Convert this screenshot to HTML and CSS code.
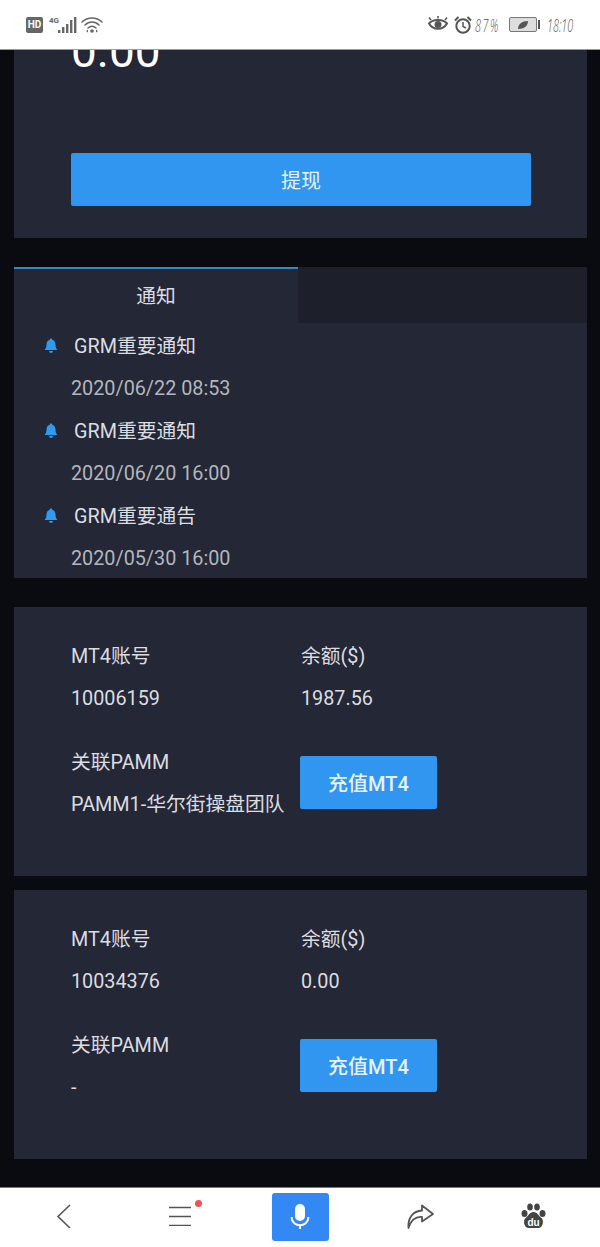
FILE: index.html
```html
<!DOCTYPE html>
<html lang="en">
<head>
    <meta charset="UTF-8">
    <meta name="viewport" content="width=device-width, initial-scale=1.0">
    <title>GRM</title>
    <link rel="stylesheet" href="styles.css">
</head>
<body>
    <div class="status-bar">
        <div class="status-left">
            <span class="hd">HD</span>
            <span class="net">4G</span>
            <svg class="signal" width="19" height="18" viewBox="0 0 19 18"><g fill="#666"><rect x="0" y="14" width="2.4" height="3"/><rect x="4" y="11" width="2.4" height="6"/><rect x="8" y="8" width="2.4" height="9"/><rect x="12" y="4" width="2.4" height="13"/><rect x="16" y="1" width="2.4" height="16"/></g></svg>
            <svg class="wifi" width="22" height="18" viewBox="0 0 22 18"><g fill="none" stroke="#666" stroke-width="1.5" stroke-linecap="round"><path d="M1 6C6.5 0.5 15.500 0.500 21 6"/><path d="M4 9C8 5 14 5 18 9"/><path d="M7 12C9.500 9.800 12.500 9.800 15 12"/></g><circle cx="11" cy="15" r="1.800" fill="#666"/><path d="M5 15l2-1.500v3zM17 15l-2-1.500v3z" fill="#666"/></svg>
        </div>
        <div class="status-right">
            <svg class="eye" width="20" height="17" viewBox="0 0 20 17"><path d="M1 7.500C5 2.800 15 2.800 19 7.500C15 14.500 5 14.500 1 7.500Z" fill="none" stroke="#555" stroke-width="2"/><circle cx="10" cy="8.500" r="3.500" fill="#555"/><path d="M3 4L1 1.500M10 2.500V0M17 4l2-2.500" stroke="#555" stroke-width="1.500"/></svg>
            <svg class="alarm" width="18" height="18" viewBox="0 0 18 18"><circle cx="9" cy="10" r="6.700" fill="none" stroke="#555" stroke-width="2"/><path d="M9 6v4.500l3 1.500" fill="none" stroke="#555" stroke-width="1.500"/><path d="M1 4.500L4.500 1M17 4.500L13.500 1" stroke="#555" stroke-width="2"/></svg>
            <span class="hand pct">87%</span>
            <span class="battery"><svg width="12" height="10" viewBox="0 0 12 10"><path d="M1 9C1 4 5 1 11 1C11 6 7 9 1 9Z" fill="#555"/></svg></span>
            <span class="battery-tip"></span>
            <span class="hand clock">18:10</span>
        </div>
    </div>

    <div class="content">
        <section class="card balance-card">
            <div class="balance">0.00</div>
            <button class="btn btn-wide">提现</button>
        </section>

        <section class="card notice-card">
            <div class="tabs">
                <div class="tab active">通知</div>
                <div class="tab"></div>
            </div>
            <ul class="notice-list">
                <li>
                    <div class="notice-title"><svg class="bell" width="14" height="16" viewBox="0 0 14 16"><path d="M7 0.500C7.800 0.500 8.200 1 8.300 1.700C10.500 2.300 11.500 4.200 11.500 6.500C11.500 9.500 12.300 10.800 13.500 12H0.500C1.700 10.800 2.500 9.500 2.500 6.500C2.500 4.200 3.500 2.300 5.700 1.700C5.800 1 6.200 0.500 7 0.500Z" fill="#2f9bf0"/><path d="M5 13h4c0 2.600-4 2.600-4 0Z" fill="#2f9bf0"/></svg>GRM重要通知</div>
                    <div class="notice-date">2020/06/22 08:53</div>
                </li>
                <li>
                    <div class="notice-title"><svg class="bell" width="14" height="16" viewBox="0 0 14 16"><path d="M7 0.500C7.800 0.500 8.200 1 8.300 1.700C10.500 2.300 11.500 4.200 11.500 6.500C11.500 9.500 12.300 10.800 13.500 12H0.500C1.700 10.800 2.500 9.500 2.500 6.500C2.500 4.200 3.500 2.300 5.700 1.700C5.800 1 6.200 0.500 7 0.500Z" fill="#2f9bf0"/><path d="M5 13h4c0 2.600-4 2.600-4 0Z" fill="#2f9bf0"/></svg>GRM重要通知</div>
                    <div class="notice-date">2020/06/20 16:00</div>
                </li>
                <li>
                    <div class="notice-title"><svg class="bell" width="14" height="16" viewBox="0 0 14 16"><path d="M7 0.500C7.800 0.500 8.200 1 8.300 1.700C10.500 2.300 11.500 4.200 11.500 6.500C11.500 9.500 12.300 10.800 13.500 12H0.500C1.700 10.800 2.500 9.500 2.500 6.500C2.500 4.200 3.500 2.300 5.700 1.700C5.800 1 6.200 0.500 7 0.500Z" fill="#2f9bf0"/><path d="M5 13h4c0 2.600-4 2.600-4 0Z" fill="#2f9bf0"/></svg>GRM重要通告</div>
                    <div class="notice-date">2020/05/30 16:00</div>
                </li>
            </ul>
        </section>

        <section class="card account-card">
            <div class="account-col">
                <div class="row">MT4账号</div>
                <div class="row">10006159</div>
                <div class="row row-gap">关联PAMM</div>
                <div class="row">PAMM1-华尔街操盘团队</div>
            </div>
            <div class="account-col">
                <div class="row">余额($)</div>
                <div class="row">1987.56</div>
                <button class="btn btn-small">充值MT4</button>
            </div>
        </section>

        <section class="card account-card second">
            <div class="account-col">
                <div class="row">MT4账号</div>
                <div class="row">10034376</div>
                <div class="row row-gap">关联PAMM</div>
                <div class="row">-</div>
            </div>
            <div class="account-col">
                <div class="row">余额($)</div>
                <div class="row">0.00</div>
                <button class="btn btn-small">充值MT4</button>
            </div>
        </section>
    </div>

    <nav class="bottom-bar">
        <div class="nav-item back">
            <svg width="16" height="24" viewBox="0 0 16 24"><path d="M14 1L2 12.500L14 24" fill="none" stroke="#555" stroke-width="1.600"/></svg>
        </div>
        <div class="nav-item menu">
            <svg width="22" height="20" viewBox="0 0 22 20"><path d="M0 1.500H22M0 10.500H22M0 19.500H22" stroke="#555" stroke-width="1.600"/></svg>
            <span class="dot"></span>
        </div>
        <div class="nav-item">
            <span class="mic-btn">
                <svg width="20" height="28" viewBox="0 0 20 28"><rect x="5" y="1" width="10" height="17" rx="5" fill="#fff"/><path d="M1.500 14C2 25 18 25 18.500 14" fill="none" stroke="#fff" stroke-width="2"/><path d="M10 22v4" stroke="#fff" stroke-width="2"/></svg>
            </span>
        </div>
        <div class="nav-item">
            <svg width="27" height="25" viewBox="0 0 27 25"><path d="M15 1.500L26 10L15 17.500V13C9 12.500 4 16 1.500 24C0.500 14 6 7 15 6.500Z" fill="none" stroke="#555" stroke-width="1.800" stroke-linejoin="round"/></svg>
        </div>
        <div class="nav-item paw">
            <svg width="25" height="26" viewBox="0 0 25 26"><g fill="#444"><ellipse cx="3.500" cy="10.500" rx="3" ry="3.600"/><ellipse cx="21.500" cy="10.500" rx="3" ry="3.600"/><ellipse cx="9" cy="4" rx="2.800" ry="3.600"/><ellipse cx="16" cy="4" rx="2.800" ry="3.600"/><path d="M12.500 9C8.500 9 7.500 13 4.500 15C2 17 2.500 25 8 25H17C22.500 25 23 17 20.500 15C17.500 13 16.500 9 12.500 9Z"/></g><text class="du" x="12.500" y="22.500" text-anchor="middle">du</text></svg>
        </div>
    </nav>
</body>
</html>
```

FILE: styles.css
```css
* {
    box-sizing: border-box;
}

html, body {
    margin: 0;
    padding: 0;
}

body {
    width: 600px;
    height: 1247px;
    display: flex;
    flex-direction: column;
    overflow: hidden;
    background: #0a0b10;
    font-family: Roboto, "Noto Sans CJK SC", sans-serif;
    font-size: 19.8px;
    color: #dcdde0;
}

.status-bar {
    height: 50px;
    flex: none;
    display: flex;
    justify-content: space-between;
    align-items: center;
    padding: 0 27px 0 26px;
    background: #fff;
    border-bottom: 1px solid #9a9a9c;
}

.status-left, .status-right {
    display: flex;
    align-items: center;
}

.hd {
    width: 17px;
    height: 16px;
    margin-right: 6px;
    background: #666;
    border-radius: 2px;
    color: #fff;
    font-size: 10px;
    font-weight: 700;
    line-height: 16px;
    text-align: center;
}

.net {
    align-self: flex-start;
    font-size: 8px;
    font-weight: 700;
    color: #666;
}

.signal {
    margin: 0 4px 0 -1px;
}

.alarm {
    margin-left: 6px;
}

.hand {
    display: inline-block;
    font-family: "Open Sans", sans-serif;
    font-size: 18px;
    font-weight: 300;
    font-style: italic;
    line-height: 20px;
    color: #555;
    white-space: nowrap;
    transform: scaleX(0.6);
    transform-origin: left center;
}

.pct {
    width: 28px;
    margin-left: 3px;
    letter-spacing: 2.5px;
}

.battery {
    width: 28px;
    height: 15px;
    margin-left: 6px;
    display: flex;
    align-items: center;
    justify-content: center;
    background: #ddd;
    border: 1px solid #777;
    border-radius: 2px;
}

.battery-tip {
    width: 2px;
    height: 9px;
    margin-left: 1px;
    background: #555;
}

.clock {
    width: 26px;
    margin-left: 7px;
}

.content {
    flex: 1;
    overflow: hidden;
    padding: 0 13px 0 14px;
}

.card {
    background: #232736;
}

.balance-card {
    height: 188px;
    padding: 0 57px;
    overflow: hidden;
}

.balance {
    height: 135px;
    margin-top: -32px;
    font-size: 46px;
    line-height: 66px;
    color: #fff;
}

.btn {
    display: block;
    border: none;
    border-radius: 2px;
    background: #3196f0;
    color: #e8f2fc;
    font-family: inherit;
    font-size: 20px;
}

.btn-wide {
    width: 460px;
    height: 53px;
}

.notice-card {
    height: 311px;
    margin-top: 29px;
    overflow: hidden;
}

.tabs {
    display: flex;
    height: 56px;
    background: #1d1f2b;
}

.tab {
    flex: 1;
    line-height: 56px;
    text-align: center;
}

.tab.active {
    flex: none;
    width: 284px;
    background: #232736;
    border-top: 2px solid #3a86c8;
    line-height: 55px;
}

.notice-list {
    margin: 0;
    padding: 0 0 0 57px;
    list-style: none;
}

.notice-list li {
    height: 85px;
}

.notice-title {
    position: relative;
    height: 46px;
    padding-left: 3px;
    line-height: 48px;
}

.bell {
    position: absolute;
    left: -27px;
    top: 15px;
}

.notice-date {
    height: 39px;
    line-height: 39px;
    color: #b4b6bc;
}

.account-card {
    display: flex;
    height: 269px;
    margin-top: 29px;
    padding: 29px 0 0 57px;
}

.account-card.second {
    margin-top: 14px;
}

.account-col {
    width: 230px;
}

.row {
    height: 42px;
    line-height: 42px;
    white-space: nowrap;
}

.row-gap {
    margin-top: 22px;
}

.btn-small {
    width: 137px;
    height: 53px;
    margin: 36px 0 0 -1px;
    font-weight: 500;
}

.bottom-bar {
    height: 60px;
    flex: none;
    display: grid;
    grid-template-columns: 130px 100px 140px 100px 130px;
    align-items: center;
    padding-bottom: 3px;
    background: #fff;
    border-top: 1px solid #77777a;
}

.nav-item {
    display: flex;
    justify-content: center;
    align-items: center;
}

.back {
    padding-right: 2px;
}

.paw {
    padding-right: 4px;
}

.menu {
    position: relative;
}

.dot {
    position: absolute;
    top: -6px;
    left: 65px;
    width: 7px;
    height: 7px;
    border-radius: 50%;
    background: #e85555;
}

.mic-btn {
    width: 57px;
    height: 48px;
    margin-top: 2px;
    display: flex;
    justify-content: center;
    align-items: center;
    background: #3388f4;
    border-radius: 3px;
}

.du {
    font-family: "Liberation Sans", sans-serif;
    font-size: 10px;
    font-weight: 700;
    fill: #fff;
}
```
